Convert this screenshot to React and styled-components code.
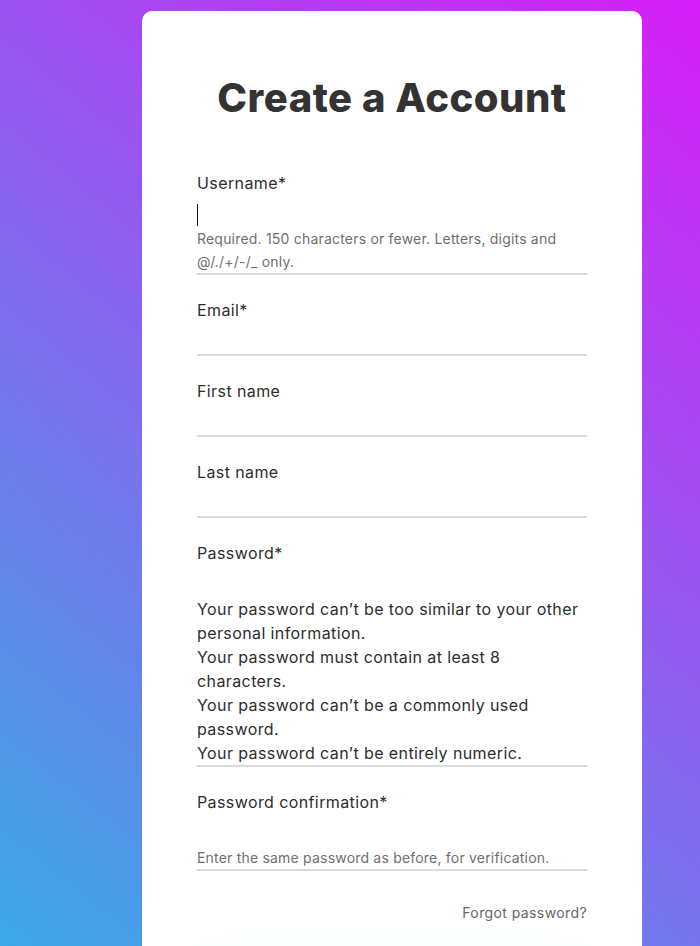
import React from "react";
import styled, { createGlobalStyle } from "styled-components";

const Global = createGlobalStyle`
  html {
    background: linear-gradient(39deg, #3aa9e6 0%, #d81ef8 100%) fixed;
    min-height: 100%;
  }
  body {
    margin: 0;
    font-family: Inter, "Noto Sans", "DejaVu Sans", sans-serif;
    color: #2d2d2d;
    letter-spacing: 0.4px;
  }
`;

const Page = styled.div`
  display: flex;
  padding: 11px 0 0 142px;
`;

const Card = styled.div`
  width: 500px;
  box-sizing: border-box;
  background: #ffffff;
  border-radius: 10px;
  padding: 63px 55px 40px;
  display: flex;
  flex-direction: column;
`;

const Title = styled.h1`
  margin: 0 0 49px;
  font-size: 40px;
  line-height: 48px;
  font-weight: 800;
  text-align: center;
  color: #333333;
  letter-spacing: 0.5px;
`;

const Form = styled.form`
  display: flex;
  flex-direction: column;
  gap: 23px;
`;

const Field = styled.div`
  display: flex;
  flex-direction: column;
  border-bottom: 2px solid #d9d9d9;
`;

const Label = styled.label`
  font-size: 16px;
  line-height: 24px;
  color: #2d2d2d;
`;

const InputWrap = styled.div`
  position: relative;
  height: 32px;
`;

const Input = styled.input`
  width: 100%;
  height: 32px;
  box-sizing: border-box;
  border: none;
  outline: none;
  background: transparent;
  padding: 0;
  font: inherit;
  font-size: 16px;
  caret-color: transparent;
`;

const Caret = styled.span`
  position: absolute;
  left: 0;
  top: 9px;
  width: 1px;
  height: 22px;
  background: #111111;
`;

const Help = styled.div`
  font-size: 14px;
  line-height: 23px;
  letter-spacing: 0.2px;
  color: #6f6f6f;
`;

const Rules = styled.ul`
  list-style: none;
  margin: 0;
  padding: 0;
  font-size: 16px;
  line-height: 24px;
  color: #2d2d2d;
`;

const Forgot = styled.a`
  align-self: flex-end;
  margin-top: 31px;
  font-size: 14px;
  line-height: 21px;
  color: #666666;
  text-decoration: none;
`;

const Submit = styled.button`
  margin-top: 48px;
  height: 48px;
  border: none;
  border-radius: 24px;
  background: linear-gradient(90deg, #3aa9e6, #d81ef8);
  color: #ffffff;
  font: inherit;
  font-size: 16px;
  box-shadow: 0 -14px 40px rgba(120, 220, 250, 0.12);
`;

const fields = [
  { label: "Username*", type: "text", caret: true,
    help: "Required. 150 characters or fewer. Letters, digits and @/./+/-/_ only." },
  { label: "Email*", type: "email" },
  { label: "First name", type: "text" },
  { label: "Last name", type: "text" },
  { label: "Password*", type: "password", rules: [
    "Your password can’t be too similar to your other personal information.",
    "Your password must contain at least 8 characters.",
    "Your password can’t be a commonly used password.",
    "Your password can’t be entirely numeric.",
  ] },
  { label: "Password confirmation*", type: "password",
    help: "Enter the same password as before, for verification." },
];

export default function App() {
  return (
    <>
      <Global />
      <Page>
        <Card>
          <Title>Create a Account</Title>
          <Form onSubmit={(e) => e.preventDefault()}>
            {fields.map((f) => (
              <Field key={f.label}>
                <Label>{f.label}</Label>
                <InputWrap>
                  <Input type={f.type} />
                  {f.caret && <Caret />}
                </InputWrap>
                {f.help && <Help>{f.help}</Help>}
                {f.rules && (
                  <Rules>
                    {f.rules.map((r) => (
                      <li key={r}>{r}</li>
                    ))}
                  </Rules>
                )}
              </Field>
            ))}
          </Form>
          <Forgot href="#">Forgot password?</Forgot>
          <Submit type="button">Sign Up</Submit>
        </Card>
      </Page>
    </>
  );
}
